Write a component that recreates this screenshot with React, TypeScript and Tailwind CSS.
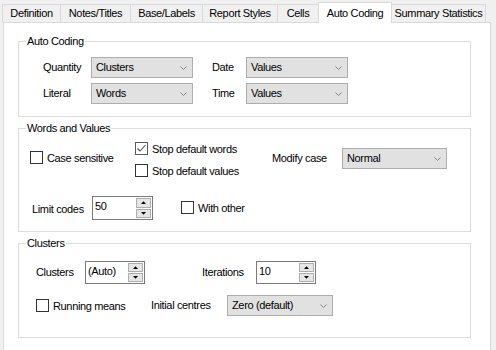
import type { ReactNode } from "react";

function Tab({ label, w, active, first, last }: { label: string; w: string; active?: boolean; first?: boolean; last?: boolean }) {
  if (active) {
    return (
      <div
        className={`relative z-10 -mb-[1px] flex h-[21px] items-start justify-center border-x border-t border-[#d9d9d9] bg-white pt-[2px] ${w}`}
      >
        {label}
      </div>
    );
  }
  return (
    <div
      className={`flex h-[18px] items-center justify-center border-t border-[#d9d9d9] bg-[#f0f0f0] ${first ? "border-l" : ""} ${last ? "border-r" : "border-l"} ${w}`}
    >
      {label}
    </div>
  );
}

function Group({ title, className, children }: { title: string; className?: string; children: ReactNode }) {
  return (
    <fieldset className={`w-[453px] border border-[#dcdcdc] ${className ?? ""}`}>
      <legend className="ml-[7px] px-[1px] leading-[14px]">{title}</legend>
      {children}
    </fieldset>
  );
}

function Chevron() {
  return (
    <svg width="7" height="4" viewBox="0 0 7 4" className="shrink-0">
      <polyline points="0.5,0.5 3.5,3.5 6.5,0.5" fill="none" stroke="#7a7a7a" strokeWidth="0.9" />
    </svg>
  );
}

function Select({ value, w }: { value: string; w: string }) {
  return (
    <div className={`flex h-[21px] items-center justify-between border border-[#adadad] bg-[#e1e1e1] pl-[4px] pr-[5px] ${w}`}>
      <span>{value}</span>
      <Chevron />
    </div>
  );
}

function Spin({ value, w, h }: { value: string; w: string; h: string }) {
  return (
    <div className={`flex border border-[#7a7a7a] bg-white ${w} ${h}`}>
      <div className="flex-1 pl-[2px] pt-[2px] leading-[14px]">{value}</div>
      <div className="flex w-[16px] flex-col gap-[1px] py-[1px] pr-[1px]">
        <div className="flex flex-1 items-center justify-center border border-[#adadad] bg-[#e6e6e6]">
          <svg width="5" height="3" viewBox="0 0 5 3">
            <polygon points="0,3 5,3 2.5,0.3" fill="#000" />
          </svg>
        </div>
        <div className="flex flex-1 items-center justify-center border border-[#adadad] bg-[#e6e6e6]">
          <svg width="5" height="3" viewBox="0 0 5 3">
            <polygon points="0,0 5,0 2.5,2.7" fill="#000" />
          </svg>
        </div>
      </div>
    </div>
  );
}

function Check({ label, checked, className }: { label: string; checked?: boolean; className?: string }) {
  return (
    <div className={`flex h-[13px] items-center ${className ?? ""}`}>
      <div className={`flex h-[13px] w-[13px] shrink-0 items-center justify-center border bg-white ${checked ? "border-[#5a5a5a]" : "border-[#333]"}`}>
        {checked && (
          <svg width="11" height="11" viewBox="0 0 11 11">
            <polyline points="1.5,5.5 4,8 9.5,2" fill="none" stroke="#555" strokeWidth="1.1" />
          </svg>
        )}
      </div>
      <span className="ml-[4px] leading-[14px]">{label}</span>
    </div>
  );
}

export default function App() {
  return (
    <div className="flex h-[350px] w-[496px] flex-col overflow-hidden bg-[#f0f0f0] font-['Liberation_Sans',Arial,sans-serif] text-[11px] tracking-[-0.35px] text-black">
      <div className="flex h-[22px] items-end pl-[2px]">
        <Tab label="Definition" w="w-[58px]" first />
        <Tab label="Notes/Titles" w="w-[70px]" />
        <Tab label="Base/Labels" w="w-[72px]" />
        <Tab label="Report Styles" w="w-[75px]" />
        <Tab label="Cells" w="w-[41px]" />
        <Tab label="Auto Coding" w="w-[74px]" active />
        <Tab label="Summary Statistics" w="w-[94px]" last />
      </div>

      <div className="ml-[3px] w-[488px] flex-1 border-x border-t border-[#d9d9d9] bg-white pl-[14px] pt-[11px]">
        <Group title="Auto Coding" className="pb-[12px]">
          <div className="mt-[9px] flex flex-col gap-[5px] pl-[24px]">
            <div className="flex items-center">
              <span className="w-[48px]">Quantity</span>
              <Select value="Clusters" w="w-[102px]" />
              <span className="ml-[19px] w-[34px]">Date</span>
              <Select value="Values" w="w-[102px]" />
            </div>
            <div className="flex items-center">
              <span className="w-[48px]">Literal</span>
              <Select value="Words" w="w-[102px]" />
              <span className="ml-[19px] w-[34px]">Time</span>
              <Select value="Values" w="w-[102px]" />
            </div>
          </div>
        </Group>

        <Group title="Words and Values" className="mt-[4px] pb-[11px]">
          <div className="mt-[7px] flex items-start pl-[11px]">
            <Check label="Case sensitive" className="mt-[9px] w-[105px]" />
            <div className="flex w-[137px] flex-col gap-[9px]">
              <Check label="Stop default words" checked />
              <Check label="Stop default values" />
            </div>
            <div className="mt-[6px] flex items-center">
              <span className="w-[70px]">Modify case</span>
              <Select value="Normal" w="w-[105px]" />
            </div>
          </div>
          <div className="mt-[19px] flex items-start pl-[13px]">
            <span className="mt-[5px] w-[60px]">Limit codes</span>
            <Spin value="50" w="w-[61px]" h="h-[24px]" />
            <Check label="With other" className="ml-[28px] mt-[5px]" />
          </div>
        </Group>

        <Group title="Clusters" className="mt-[4px] pb-[21px]">
          <div className="mt-[11px] flex items-center pl-[17px]">
            <span className="w-[49px]">Clusters</span>
            <Spin value="(Auto)" w="w-[60px]" h="h-[23px]" />
            <span className="ml-[57px] w-[54px]">Iterations</span>
            <Spin value="10" w="w-[60px]" h="h-[23px]" />
          </div>
          <div className="mt-[11px] flex items-center pl-[17px]">
            <Check label="Running means" className="w-[115px]" />
            <span className="w-[76px]">Initial centres</span>
            <Select value="Zero (default)" w="w-[106px]" />
          </div>
        </Group>
      </div>
    </div>
  );
}
